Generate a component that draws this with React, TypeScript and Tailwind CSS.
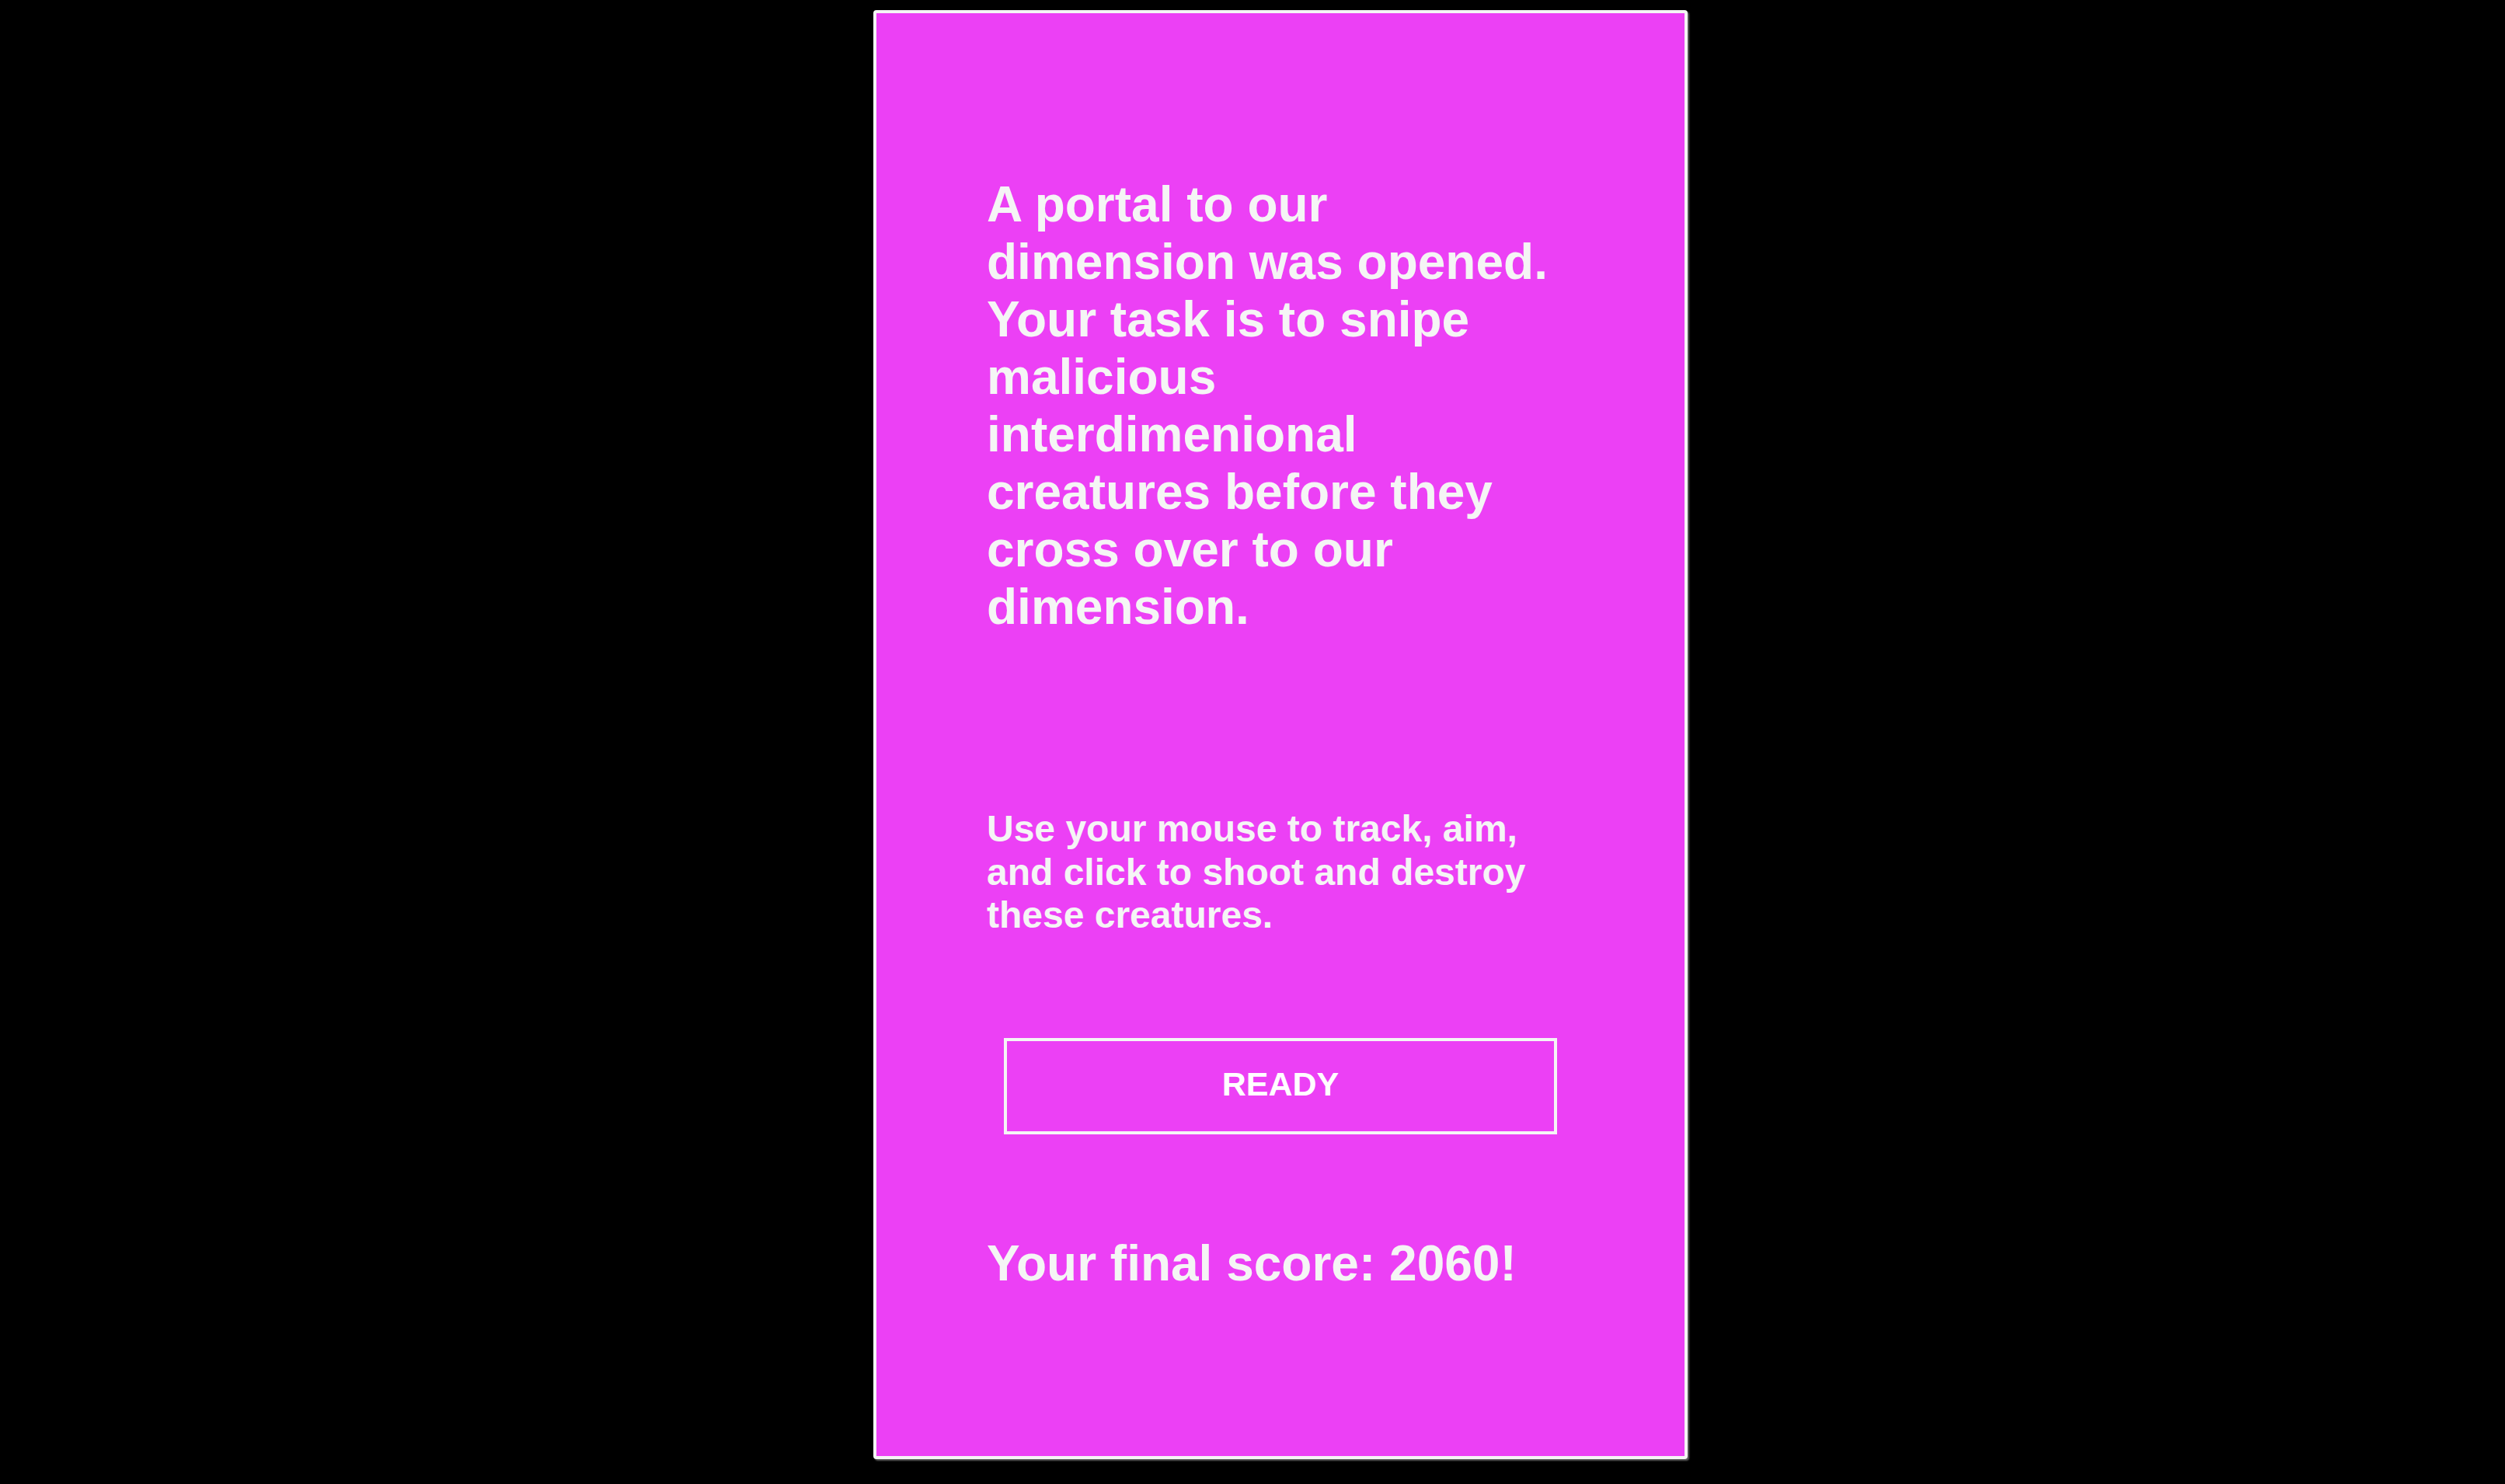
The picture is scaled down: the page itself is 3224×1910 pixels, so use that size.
import React from "react";

export default function App() {
  return (
    <div
      className="min-h-[1910px] w-full bg-black pl-[1124px] pt-[13px] pb-[32px]"
      style={{ fontFamily: '"Liberation Sans", Arial, sans-serif' }}
    >
      <div className="flex h-[1865px] w-[1048px] flex-col rounded-[4px] border-4 border-[#f5f5f5] bg-[#ec40f5] shadow-[2px_2px_2px_rgba(160,160,160,0.6)]">
        <div className="ml-[142px] mt-[209px] flex w-[756px] flex-col">
          <h1 className="text-[64px] font-bold leading-[74px] text-[#f5f5f5]">
            A portal to our dimension was opened. Your task is to snipe malicious
            interdimenional creatures before they cross over to our dimension.
          </h1>
          <p className="mt-[221px] text-[48px] font-bold leading-[55.5px] text-[#f5f5f5]">
            Use your mouse to track, aim, and click to shoot and destroy these
            creatures.
          </p>
          <button className="mx-[22px] mt-[130px] flex h-[124px] items-center justify-center border-4 border-[#f5f5f5] bg-transparent pb-[5px] text-[43px] font-bold text-white">
            READY
          </button>
          <p className="mt-[129px] text-[64px] font-bold leading-[74px] text-[#f5f5f5]">
            Your final score: 2060!
          </p>
        </div>
      </div>
    </div>
  );
}
